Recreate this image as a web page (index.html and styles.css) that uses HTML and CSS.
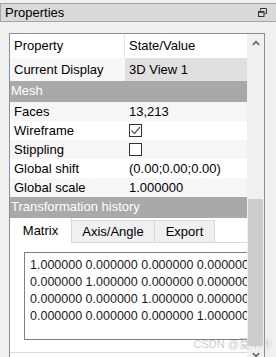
FILE: index.html
```html
<!DOCTYPE html>
<html lang="en">
<head>
  <meta charset="UTF-8" />
  <title>Properties</title>
  <link rel="stylesheet" href="styles.css">
</head>
<body>
  <div class="dock">
    <div class="dock-title">
      <span>Properties</span>
      <svg class="float-icon" width="9" height="9" viewBox="0 0 9 9">
        <path d="M2.5 0.5h6v5h-2" fill="none" stroke="#333" stroke-width="1"/>
        <path d="M2.5 0.5v2" fill="none" stroke="#333" stroke-width="1"/>
        <rect x="0.5" y="3.5" width="5.5" height="5" fill="none" stroke="#333" stroke-width="1"/>
        <path d="M0.5 4h5.5" stroke="#333" stroke-width="1.6"/>
      </svg>
    </div>

    <div class="dock-body">
      <div class="frame">
        <div class="table">
          <div class="row head">
            <div class="cell name">Property</div>
            <div class="cell value">State/Value</div>
          </div>
          <div class="row current">
            <div class="cell name">Current Display</div>
            <div class="cell value">3D View 1</div>
          </div>

          <div class="section">Mesh</div>
          <div class="row alt">
            <div class="cell name">Faces</div>
            <div class="cell value">13,213</div>
          </div>
          <div class="row">
            <div class="cell name">Wireframe</div>
            <div class="cell value">
              <span class="check">
                <svg width="11" height="11" viewBox="0 0 11 11"><path d="M1.5 5.5l3 3l5.5-6.5" fill="none" stroke="#5a5a5a" stroke-width="1.2"/></svg>
              </span>
            </div>
          </div>
          <div class="row alt">
            <div class="cell name">Stippling</div>
            <div class="cell value"><span class="check"></span></div>
          </div>
          <div class="row">
            <div class="cell name">Global shift</div>
            <div class="cell value">(0.00;0.00;0.00)</div>
          </div>
          <div class="row alt">
            <div class="cell name">Global scale</div>
            <div class="cell value">1.000000</div>
          </div>

          <div class="section">Transformation history</div>
          <div class="tabs">
            <div class="tab active">Matrix</div>
            <div class="tab">Axis/Angle</div>
            <div class="tab">Export</div>
            <div class="tab-rest"></div>
          </div>
          <div class="tab-pane">
            <div class="matrix">
              <div>1.000000 0.000000 0.000000 0.000000</div>
              <div>0.000000 1.000000 0.000000 0.000000</div>
              <div>0.000000 0.000000 1.000000 0.000000</div>
              <div>0.000000 0.000000 0.000000 1.000000</div>
            </div>
          </div>
        </div>

        <div class="vscroll">
          <div class="sb-btn">
            <svg width="8" height="6" viewBox="0 0 8 6"><path d="M0.8 5l3.2-3.4l3.2 3.4" fill="none" stroke="#606060" stroke-width="1.6"/></svg>
          </div>
          <div class="sb-track"><div class="sb-thumb"></div></div>
          <div class="sb-btn">
            <svg width="8" height="6" viewBox="0 0 8 6"><path d="M0.8 1l3.2 3.4l3.2-3.4" fill="none" stroke="#606060" stroke-width="1.6"/></svg>
          </div>
        </div>
      </div>
    </div>

    <div class="watermark">CSDN @夏木③</div>
  </div>
</body>
</html>
```

FILE: styles.css
```css
body {
  margin: 0;
  background-color: #f0f0f0;
  font-family: "Liberation Sans", Arial, "Noto Sans CJK SC", sans-serif;
  font-size: 13px;
  color: #000;
  overflow: hidden;
}
.dock {
  position: relative;
  height: 357px;
  overflow: hidden;
}
.dock-title {
  margin-top: 3px;
  height: 17px;
  background-color: #d9d9d9;
  border: 1px solid #a5a5a5;
  border-right: none;
  display: flex;
  align-items: center;
  justify-content: space-between;
  padding: 0 9px 0 4px;
}

.dock-body {
  padding: 11px 0 0 9px;
}
.frame {
  width: 254px;
  height: 330px;
  border: 1px solid #8e8f94;
  border-bottom: none;
  display: flex;
  background-color: #f0f0f0;
}
.table {
  width: 237px;
  overflow: hidden;
  background-color: #fff;
}

.row {
  display: flex;
  height: 19px;
  line-height: 19px;
  background-color: #fff;
}
.row.alt { background-color: #f6f6f6; }
.cell { white-space: nowrap; }
.cell.name { width: 115px; padding-left: 4px; box-sizing: border-box; }
.cell.value { flex: 1; padding-left: 4px; display: flex; align-items: center; }

.row.head { height: 24px; line-height: 24px; }
.row.head .cell.name { border-right: 1px solid #e6e6e6; }
.row.current { height: 23px; line-height: 23px; background-color: #f7f7f7; }
.row.current .cell.value { background-color: #e0e0e0; }

.section {
  height: 21px;
  line-height: 20px;
  background-color: #a9a9a9;
  color: #fff;
  padding-left: 1px;
}

.check {
  width: 11px;
  height: 11px;
  border: 1px solid #333;
  background-color: #fff;
  display: flex;
}

.tabs {
  display: flex;
  height: 25px;
  align-items: flex-end;
  background-color: #fff;
}
.tab {
  height: 22px;
  line-height: 22px;
  background-color: #f0f0f0;
  border: 1px solid #d9d9d9;
  border-left: none;
  text-align: center;
  box-sizing: border-box;
}
.tab.active {
  height: 25px;
  line-height: 25px;
  width: 62px;
  background-color: #fff;
  border-bottom: none;
  border-top: none;
}
.tab:nth-child(2) { width: 83px; height: 23px; }
.tab:nth-child(3) { width: 60px; height: 23px; }
.tab-rest {
  flex: 1;
  height: 24px;
  border-bottom: 1px solid #d9d9d9;
}

.tab-pane {
  height: 110px;
  padding: 9px 0 0 14px;
  box-sizing: border-box;
  border-bottom: 1px solid #d9d9d9;
}
.matrix {
  width: 260px;
  height: 88px;
  border: 1px solid #7f7f7f;
  padding: 4px 0 0 5px;
  box-sizing: border-box;
  font-size: 12.5px;
  line-height: 17px;
  white-space: nowrap;
  color: #1a1a1a;
}

.vscroll {
  width: 17px;
  display: flex;
  flex-direction: column;
  background-color: #f0f0f0;
}
.sb-btn {
  height: 17px;
  display: flex;
  align-items: center;
  justify-content: center;
}
.sb-track {
  height: 295px;
  padding-top: 148px;
  box-sizing: border-box;
}
.sb-thumb {
  width: 15px;
  height: 147px;
  margin-left: 1px;
  background-color: #cdcdcd;
}

.watermark {
  position: absolute;
  right: 4px;
  bottom: 6px;
  font-size: 11px;
  color: #cdcdcd;
}
```
